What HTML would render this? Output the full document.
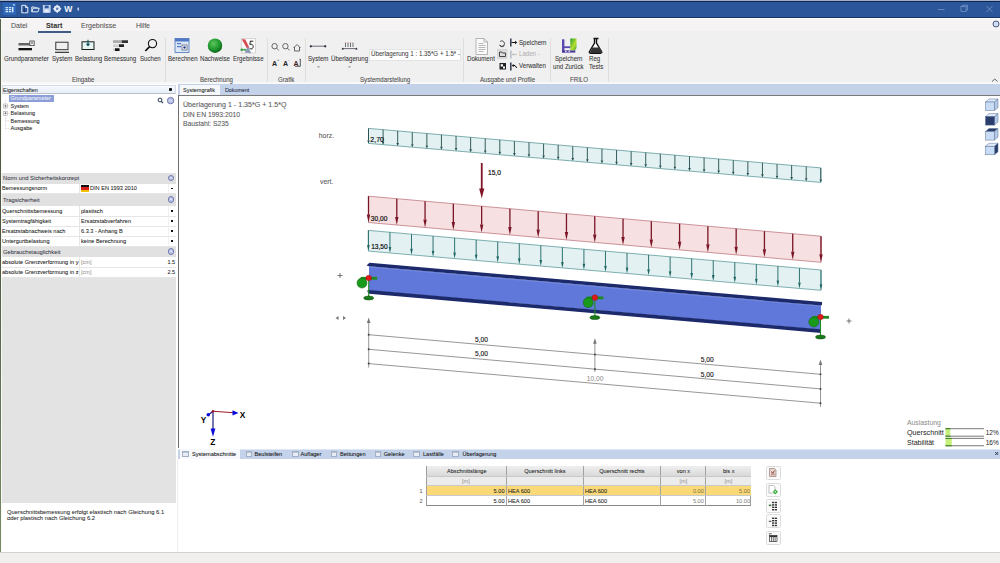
<!DOCTYPE html>
<html><head><meta charset="utf-8">
<style>
*{margin:0;padding:0;box-sizing:border-box}
html,body{width:1000px;height:563px;overflow:hidden;background:#f0f0f0;font-family:"Liberation Sans",sans-serif;color:#222}
.a{position:absolute;white-space:nowrap}
.t{position:absolute;white-space:nowrap;line-height:10px;height:10px;-webkit-text-stroke-width:0.06px}
.m{font-size:7px;color:#505050}
.rl{font-size:6.5px;color:#333;transform:scaleX(0.94);transform-origin:0 50%}
.gl{font-size:6.5px;color:#4a4a4a;transform:scaleX(0.94);transform-origin:0 50%}
.pg{font-size:5.7px;color:#333}
.sep{position:absolute;width:1px;background:#dedede}
svg{position:absolute;left:0;top:0}
</style></head><body>

<div class="a" style="left:0;top:0;width:1000px;height:18px;background:#2b579a"></div>
<div class="a" style="left:0;top:0;width:1000px;height:1px;background:#9fb0c9"></div>
<div class="a" style="left:0;top:1px;width:1000px;height:1px;background:#102550"></div>
<div class="a" style="left:0;top:17px;width:1000px;height:1px;background:#163366"></div>
<div class="a" style="left:0;top:18px;width:1000px;height:1px;background:#ffffff"></div>
<div class="a" style="left:3px;top:3px;width:13px;height:12px;background:#2d66b5"></div>
<svg width="1000" height="20" viewBox="0 0 1000 20">
<g fill="#cfe3ff">
<rect x="5.5" y="7" width="2.5" height="1.3"/><rect x="5.5" y="9" width="2.5" height="1.3"/><rect x="5.5" y="11" width="2.5" height="1.3"/>
<rect x="8.8" y="7" width="2.5" height="1.3"/><rect x="8.8" y="9" width="2.5" height="1.3"/><rect x="8.8" y="11" width="2.5" height="1.3"/>
<rect x="12" y="7" width="1.5" height="5.3"/><circle cx="14" cy="4.8" r="0.9"/>
</g>
<g fill="none" stroke="#e4ecf8" stroke-width="1">
<path d="M21.8 5.3h3.8l2.2 2.2v5.3h-6z"/><path d="M25.6 5.3v2.2h2.2"/>
<path d="M31.8 7v4.8h6.2l1.2-3.6h-6l-1.4 3.6"/><path d="M31.8 7h2.4l0.8 0.8h2.2v0.4"/>
</g>
<path d="M24.3 8.5v3.8" stroke="#1a2f66" stroke-width="1.1"/>
<rect x="43.2" y="5.3" width="7" height="7.2" fill="#b4c8ec" stroke="#e4ecf8" stroke-width="0.6"/><rect x="44.8" y="5.6" width="3.8" height="2.6" fill="#2f5aa0"/><rect x="44.6" y="9.6" width="4.2" height="2.6" fill="#e8eef8"/>
<circle cx="57.2" cy="8.8" r="3.3" fill="#e4ecf8"/><circle cx="57.2" cy="8.8" r="1.3" fill="#5a7ab8"/>
<g fill="#e4ecf8"><rect x="56.5" y="4.8" width="1.4" height="1.4"/><rect x="56.5" y="11.4" width="1.4" height="1.4"/><rect x="53.2" y="8.1" width="1.4" height="1.4"/><rect x="59.8" y="8.1" width="1.4" height="1.4"/></g>
<text x="64.3" y="12.4" font-family="Liberation Sans" font-weight="bold" font-size="8.6" fill="#f3f6fb">W</text>
<rect x="77.5" y="7.6" width="1.5" height="2.8" rx="0.5" fill="#c9d5ea"/>
<g stroke="#7f9bcb" stroke-width="0.7" fill="none">
<path d="M938 9.5h6.5"/>
<rect x="961" y="6.5" width="5" height="5"/><path d="M962.5 6.5v-1.3h5v5h-1.4"/>
<path d="M986.5 6l6 6M992.5 6l-6 6"/>
</g>
</svg>
<div class="a" style="left:0;top:19px;width:1000px;height:12px;background:#f6f3f5"></div>
<div class="t m" style="left:11px;top:20.60px;">Datei</div>
<div class="t m" style="left:46px;top:20.60px;font-weight:bold;color:#333;font-size:7.2px">Start</div>
<div class="t m" style="left:81px;top:20.60px;">Ergebnisse</div>
<div class="t m" style="left:136px;top:20.60px;">Hilfe</div>
<div class="a" style="left:0;top:31px;width:1000px;height:51px;background:#f0f0f0"></div>
<div class="a" style="left:0;top:82px;width:1000px;height:2px;background:#f8f8f8"></div>
<div class="t rl" style="left:4px;top:54.10px;">Grundparameter</div>
<div class="t rl" style="left:52px;top:54.10px;">System</div>
<div class="t rl" style="left:75px;top:54.10px;">Belastung</div>
<div class="t rl" style="left:104px;top:54.10px;">Bemessung</div>
<div class="t rl" style="left:140px;top:54.10px;">Suchen</div>
<div class="t rl" style="left:167.7px;top:54.10px;">Berechnen</div>
<div class="t rl" style="left:200px;top:54.10px;">Nachweise</div>
<div class="t rl" style="left:232.8px;top:54.10px;">Ergebnisse</div>
<div class="t gl" style="left:72px;top:74.50px;">Eingabe</div>
<div class="t gl" style="left:200px;top:74.50px;">Berechnung</div>
<div class="t gl" style="left:278px;top:74.50px;">Grafik</div>
<div class="t gl" style="left:359.5px;top:74.50px;">Systemdarstellung</div>
<div class="t gl" style="left:480px;top:74.50px;">Ausgabe und Profile</div>
<div class="t gl" style="left:570px;top:74.50px;">FRILO</div>
<div class="sep" style="left:165px;top:38px;height:44px"></div>
<div class="sep" style="left:267px;top:38px;height:44px"></div>
<div class="sep" style="left:304.5px;top:38px;height:44px"></div>
<div class="sep" style="left:463px;top:38px;height:44px"></div>
<div class="sep" style="left:549.5px;top:38px;height:44px"></div>
<div class="sep" style="left:607.5px;top:38px;height:44px"></div>
<div class="t rl" style="left:308px;top:54.20px;">System</div>
<div class="t rl" style="left:331px;top:54.20px;">Überlagerung</div>
<div class="t rl" style="left:467px;top:54.20px;">Dokument</div>
<div class="t rl" style="left:519px;top:37.60px;">Speichern</div>
<div class="t rl" style="left:519px;top:49.00px;color:#b0b0b0">Laden -</div>
<div class="t rl" style="left:519px;top:61.00px;">Verwalten</div>
<div class="t rl" style="left:555px;top:54.00px;">Speichern</div>
<div class="t rl" style="left:553px;top:61.50px;">und Zurück</div>
<div class="t rl" style="left:589px;top:54.00px;">Reg</div>
<div class="t rl" style="left:588.5px;top:61.50px;">Tests</div>
<div class="a" style="left:369px;top:48.5px;width:92px;height:12px;background:#fff;border:1px solid #e3e3e3"></div>
<div class="t rl" style="left:371px;top:49.30px;font-size:6.6px;color:#444">Überlagerung 1 : 1.35*G + 1.5* -</div>
<svg width="1000" height="90" viewBox="0 0 1000 90">
<!-- Grundparameter -->
<g><rect x="18.5" y="43" width="11.5" height="2.5" fill="#666"/><rect x="18.5" y="48" width="13.5" height="2.3" fill="#111"/>
<rect x="29.8" y="41" width="4.4" height="4.6" fill="#eee" stroke="#444" stroke-width="0.8"/><path d="M31 42.6h2l-1 1.3z" fill="#222"/></g>
<!-- System -->
<g fill="none" stroke="#222" stroke-width="0.9"><rect x="55.8" y="42.2" width="12.2" height="7.5"/><path d="M55 52.3h14" stroke-width="1.1"/></g>
<!-- Belastung -->
<g><rect x="82" y="41.8" width="12" height="7.7" fill="#e6f4f4" stroke="#1a1a1a" stroke-width="1"/><path d="M88 39.8v4.5" stroke="#0b4d5b" stroke-width="1.1"/><path d="M85.8 43.8h4.4l-2.2 2.6z" fill="#0b4d5b"/></g>
<!-- Bemessung -->
<g><rect x="113" y="40.3" width="15" height="2.7" fill="#d0d0d0"/><rect x="121.5" y="40.3" width="6.5" height="2.7" fill="#333"/><rect x="113" y="40.3" width="8.5" height="2.7" fill="#aaa"/>
<rect x="113" y="44.3" width="11" height="2.7" fill="#d0d0d0"/><rect x="119" y="44.3" width="5" height="2.7" fill="#222"/>
<rect x="113" y="48.3" width="6.5" height="2.7" fill="#d0d0d0"/><rect x="115" y="48.3" width="4.5" height="2.7" fill="#111"/></g>
<!-- Suchen -->
<g fill="none" stroke="#111" stroke-width="1.1"><circle cx="152.5" cy="43.6" r="4.1"/><path d="M149.6 46.6l-4.3 4.4" stroke-width="1.7"/></g>
<!-- Berechnen -->
<g><rect x="175" y="38.5" width="14" height="14" fill="#dbe7f7" stroke="#4a73b8" stroke-width="0.8"/><rect x="175" y="38.5" width="14" height="3" fill="#4f79c4"/>
<rect x="177" y="43" width="4" height="1.2" fill="#4f79c4"/><rect x="177" y="46" width="4" height="1.2" fill="#4f79c4"/><rect x="182" y="45" width="5" height="5" fill="#fff" stroke="#335" stroke-width="0.6"/><circle cx="184.5" cy="47.5" r="1.2" fill="#1a3d8a"/></g>
<!-- Nachweise -->
<defs><radialGradient id="gb" cx="0.4" cy="0.35" r="0.7"><stop offset="0" stop-color="#5cc85c"/><stop offset="0.65" stop-color="#1a922a"/><stop offset="1" stop-color="#0b5a16"/></radialGradient></defs>
<circle cx="215" cy="45.7" r="7.2" fill="url(#gb)"/>
<!-- Ergebnisse -->
<g><rect x="241.2" y="38.6" width="14.3" height="14.4" fill="#fbfbfb" stroke="#c8c0c0" stroke-width="0.6"/>
<path d="M241.8 39.2h3.4l4.2 8.5-2 1.5z" fill="#d84a50"/><path d="M244.5 52.6l3.5-6 3.2 6.6z" fill="#8a9ab8"/>
<path d="M250 41.2h3.3M250.3 41.2l-0.4 3.2c1.8-0.6 3.3 0.2 3.3 2.2s-1.8 3-3.6 2" fill="none" stroke="#111" stroke-width="0.9"/>
<circle cx="241.8" cy="49.8" r="1.3" fill="#2a9a3a"/><path d="M242.5 49.8h2.5" stroke="#2a9a3a" stroke-width="1.1"/><path d="M244.6 48.3l1.8 1.5-1.8 1.5z" fill="#2a9a3a"/></g>
<!-- Grafik -->
<g fill="none" stroke="#555" stroke-width="0.9"><circle cx="274.6" cy="46.2" r="2.7"/><path d="M276.6 48.2l2.2 2.2"/><circle cx="285.4" cy="46.2" r="2.7"/><path d="M287.4 48.2l2.2 2.2"/>
<path d="M293.5 48l3.5-3.5 3.5 3.5M294.5 47v4h5v-4"/></g>
<g font-family="Liberation Sans" font-weight="bold" font-size="7" fill="#222"><text x="272" y="65.5">A</text><text x="283" y="65.5">A</text><text x="293.5" y="65.5" fill="#4a1a20">A</text></g>
<g font-family="Liberation Sans" font-size="4" fill="#222"><text x="277" y="61">+</text><text x="288" y="61">-</text></g>
<path d="M295 66.3h5.3v-7.3l-0.8 0.3" fill="none" stroke="#333" stroke-width="0.8"/>
<!-- System icon -->
<g><path d="M310.5 46.2h15" fill="none" stroke="#334" stroke-width="0.7"/><circle cx="310.8" cy="46.3" r="1.1" fill="#223"/><circle cx="325.2" cy="46.3" r="1.1" fill="#223"/></g>
<!-- Uberlagerung icon -->
<g stroke="#334" stroke-width="0.7" fill="none"><path d="M342.5 48.6h14"/><path d="M345.5 42.8v4.2M348 42.8v4.2M350.5 42.8v4.2M353 42.8v4.2"/></g>
<g fill="#223"><path d="M341.5 49.5l1.2-2 1.2 2z"/><path d="M355.3 49.5l1.2-2 1.2 2z"/></g>
<path d="M345 42.6h8.5" stroke="#d07070" stroke-width="0.5" stroke-dasharray="0.8 0.9"/>
<g fill="#555"><rect x="317.5" y="66.5" width="2" height="0.8"/><rect x="348.5" y="66.5" width="2" height="0.8"/></g>
<!-- Dokument -->
<g><path d="M476 38.5h8l3.5 3.5v12.5h-11.5z" fill="#fafafa" stroke="#9a9a9a" stroke-width="0.7"/><path d="M484 38.5v3.5h3.5" fill="none" stroke="#9a9a9a" stroke-width="0.7"/>
<g stroke="#a8a8a8" stroke-width="0.8"><path d="M478.5 43.5h5M478.5 45.5h7M478.5 47.5h7M478.5 49.5h7M478.5 51.5h5"/></g></g>
<!-- small icons -->
<g fill="none" stroke="#333" stroke-width="0.8"><path d="M500 41.5a2.7 2.7 0 1 1 -0.5 3.5"/><path d="M504.5 45.5a2.7 2.7 0 0 1 -4.8 -0.5"/></g>
<rect x="497.5" y="49.5" width="9.5" height="9" fill="#dcdcdc" stroke="#c8c8c8" stroke-width="0.5"/>
<g fill="none" stroke="#222" stroke-width="0.8"><path d="M499.5 52v4.5h6v-3.5h-3l-0.7 -1z"/></g>
<rect x="499.5" y="63" width="6.5" height="6.5" fill="#222"/><rect x="500.7" y="64.2" width="2.3" height="2.3" fill="#fff"/><rect x="503" y="66.5" width="2" height="2" fill="#fff"/>
<g><rect x="510" y="38.5" width="1.6" height="8" fill="#3a4658"/><path d="M511.6 42.5h4" stroke="#111" stroke-width="1"/><path d="M515 40.8l2.2 1.7-2.2 1.7z" fill="#111"/></g>
<g><rect x="510" y="50.5" width="1.6" height="8" fill="#b8bec8"/><path d="M513 54.5h4" stroke="#bbb" stroke-width="0.9"/><path d="M513.5 53l-1.8 1.5 1.8 1.5z" fill="#bbb"/></g>
<g><rect x="510" y="62.5" width="1.6" height="8" fill="#3a4658"/><path d="M512.5 65.5h2.5l1.8 2.5" stroke="#111" stroke-width="1" fill="none"/><circle cx="513.3" cy="65.6" r="1.1" fill="#111"/></g>
<!-- FRILO save -->
<defs><linearGradient id="fg" x1="0" y1="0" x2="1" y2="1"><stop offset="0" stop-color="#1f9a2a"/><stop offset="0.6" stop-color="#b8e030"/><stop offset="1" stop-color="#3aa02a"/></linearGradient></defs>
<g><rect x="562" y="39.3" width="2.4" height="13.2" fill="#5a4ab0"/><rect x="562" y="46.3" width="8.5" height="1.8" fill="#5a4ab0"/><rect x="562" y="50.3" width="13.3" height="2.3" fill="#4a3aa0"/>
<rect x="565" y="50.6" width="1.6" height="1.4" fill="#cfd8f0"/><rect x="568.5" y="50.6" width="1.6" height="1.4" fill="#cfd8f0"/>
<path d="M570.3 38.4h6.2v9.5l-1.4 2.3h-4.8z" fill="url(#fg)"/></g>
<!-- flask -->
<g><path d="M593.5 38.5h5M594.5 38.5v4.5l-5 8.5c-0.6 1 0 1.7 1 1.7h10c1 0 1.6-0.7 1-1.7l-5-8.5v-4.5" fill="#fff" stroke="#111" stroke-width="1.4"/>
<path d="M592.5 47.5h7l3 5.5h-13z" fill="#333"/></g>
<!-- help and collapse -->
<circle cx="996" cy="24" r="3" fill="#cfdcf2" stroke="#3c4a70" stroke-width="0.9"/>
<path d="M992 81.5l2.8-2.5 2.8 2.5" fill="none" stroke="#444" stroke-width="0.8"/>
</svg>
<div class="a" style="left:38px;top:31px;width:33px;height:2px;background:#3f5b86"></div>
<div class="a" style="left:0;top:84px;width:178px;height:468px;background:#fff"></div>
<div class="a" style="left:0;top:19px;width:1px;height:533px;background:linear-gradient(#56604f,#4c5548 40%,#7a8a6a)"></div>
<div class="a" style="left:1px;top:19px;width:1px;height:533px;background:#f7faee;opacity:0.8"></div>
<div class="a" style="left:2px;top:84.5px;width:173.5px;height:9px;background:linear-gradient(#f7f9fd,#e7eef8);border:1px solid #d3dbe6;border-bottom-color:#b9c0c9"></div>
<div class="t pg" style="left:3px;top:84.60px;font-size:5.5px;color:#222">Eigenschaften</div>
<div class="a" style="left:169px;top:87.5px;width:2.5px;height:3px;background:#111;border-radius:1px"></div>
<div class="a" style="left:9px;top:95px;width:44.5px;height:6.6px;background:#8b9ed8"></div>
<div class="t pg" style="left:10.5px;top:93.30px;font-size:5.5px;color:#eef2fb">Grundparameter</div>
<div class="t pg" style="left:10.6px;top:101.00px;font-size:5.5px;color:#222">System</div>
<div class="t pg" style="left:10.6px;top:108.30px;font-size:5.5px;color:#222">Belastung</div>
<div class="t pg" style="left:10.6px;top:115.80px;font-size:5.5px;color:#222">Bemessung</div>
<div class="t pg" style="left:10.6px;top:123.10px;font-size:5.5px;color:#222">Ausgabe</div>
<svg width="180" height="140" viewBox="0 0 180 140">
<g stroke="#aaa" stroke-width="0.5" fill="none" stroke-dasharray="0.7 0.7"><path d="M5.5 100v28.5h4M5.5 120.5h4M7 106h2.5M7 113.3h2.5"/></g>
<g fill="#fff" stroke="#999" stroke-width="0.5"><rect x="3.5" y="104" width="4" height="4"/><rect x="3.5" y="111.3" width="4" height="4"/></g>
<g stroke="#333" stroke-width="0.5"><path d="M4.3 106h2.4M5.5 104.8v2.4M4.3 113.3h2.4M5.5 112.1v2.4"/></g>
<g fill="none" stroke="#2b3a55" stroke-width="1"><circle cx="160" cy="100" r="1.9"/></g><path d="M161.3 101.3l1.8 1.8" stroke="#2b3a55" stroke-width="1.2"/>
<circle cx="170.6" cy="100.6" r="3.2" fill="#b9c1e8" stroke="#7078ac" stroke-width="1"/><path d="M169.3 101.5l1.3-1.6 1.3 1.6" fill="none" stroke="#f4f6ff" stroke-width="0.7"/>
</svg>
<div class="a" style="left:2px;top:172.5px;width:174px;height:105px;background:#fff"></div>
<div class="a" style="left:2px;top:172.5px;width:174px;height:11.0px;background:#e1e1e1"></div>
<div class="t pg" style="left:3px;top:173.00px;font-size:5.8px;color:#3b3b4b">Norm und Sicherheitskonzept</div>
<div class="a" style="left:167.6px;top:174.6px;width:6.8px;height:6.8px;border-radius:50%;background:#b9c1e8;border:1.1px solid #6f78ac"></div>
<svg width="1000" height="563" viewBox="0 0 1000 563"><path d="M169.6 178.9l1.4-1.8 1.4 1.8" fill="none" stroke="#f4f6ff" stroke-width="0.8"/></svg>
<div class="a" style="left:2px;top:193px;width:174px;height:13px;background:#e1e1e1"></div>
<div class="t pg" style="left:3px;top:194.50px;font-size:5.8px;color:#3b3b4b">Tragsicherheit</div>
<div class="a" style="left:167.6px;top:196.1px;width:6.8px;height:6.8px;border-radius:50%;background:#b9c1e8;border:1.1px solid #6f78ac"></div>
<svg width="1000" height="563" viewBox="0 0 1000 563"><path d="M169.6 200.4l1.4-1.8 1.4 1.8" fill="none" stroke="#f4f6ff" stroke-width="0.8"/></svg>
<div class="a" style="left:2px;top:246px;width:174px;height:11px;background:#e1e1e1"></div>
<div class="t pg" style="left:3px;top:246.50px;font-size:5.8px;color:#3b3b4b">Gebrauchstauglichkeit</div>
<div class="a" style="left:167.6px;top:248.1px;width:6.8px;height:6.8px;border-radius:50%;background:#b9c1e8;border:1.1px solid #6f78ac"></div>
<svg width="1000" height="563" viewBox="0 0 1000 563"><path d="M169.6 252.4l1.4-1.8 1.4 1.8" fill="none" stroke="#f4f6ff" stroke-width="0.8"/></svg>
<div class="a" style="left:2px;top:192.5px;width:174px;height:0.7px;background:#e6e6e6"></div>
<div class="t pg" style="left:2px;top:183.25px;font-size:5.6px;color:#222">Bemessungsnorm</div>
<div class="a" style="left:79px;top:183.5px;width:0.7px;height:9.5px;background:#e6e6e6"></div>
<div class="a" style="left:168px;top:183.5px;width:0.7px;height:9.5px;background:#f0f0f0"></div>
<div class="a" style="left:171px;top:187.65px;width:1.6px;height:1.4px;background:#111"></div>
<div class="t pg" style="left:90px;top:183.25px;font-size:5.6px;color:#222">DIN EN 1993 2010</div>
<div class="a" style="left:2px;top:215.5px;width:174px;height:0.7px;background:#e6e6e6"></div>
<div class="t pg" style="left:2px;top:206.00px;font-size:5.6px;color:#222">Querschnittsbemessung</div>
<div class="a" style="left:79px;top:206px;width:0.7px;height:10px;background:#e6e6e6"></div>
<div class="a" style="left:168px;top:206px;width:0.7px;height:10px;background:#f0f0f0"></div>
<div class="a" style="left:171px;top:210.4px;width:1.6px;height:1.4px;background:#111"></div>
<div class="t pg" style="left:81px;top:206.00px;font-size:5.6px;color:#222">plastisch</div>
<div class="a" style="left:2px;top:225.5px;width:174px;height:0.7px;background:#e6e6e6"></div>
<div class="t pg" style="left:2px;top:216.00px;font-size:5.6px;color:#222">Systemtragfähigkeit</div>
<div class="a" style="left:79px;top:216px;width:0.7px;height:10px;background:#e6e6e6"></div>
<div class="a" style="left:168px;top:216px;width:0.7px;height:10px;background:#f0f0f0"></div>
<div class="a" style="left:171px;top:220.4px;width:1.6px;height:1.4px;background:#111"></div>
<div class="t pg" style="left:81px;top:216.00px;font-size:5.6px;color:#222">Ersatzstabverfahren</div>
<div class="a" style="left:2px;top:235.5px;width:174px;height:0.7px;background:#e6e6e6"></div>
<div class="t pg" style="left:2px;top:226.00px;font-size:5.6px;color:#222">Ersatzstabnachweis nach</div>
<div class="a" style="left:79px;top:226px;width:0.7px;height:10px;background:#e6e6e6"></div>
<div class="a" style="left:168px;top:226px;width:0.7px;height:10px;background:#f0f0f0"></div>
<div class="a" style="left:171px;top:230.4px;width:1.6px;height:1.4px;background:#111"></div>
<div class="t pg" style="left:81px;top:226.00px;font-size:5.6px;color:#222">6.3.3 - Anhang B</div>
<div class="a" style="left:2px;top:245.5px;width:174px;height:0.7px;background:#e6e6e6"></div>
<div class="t pg" style="left:2px;top:236.00px;font-size:5.6px;color:#222">Untergurtbelastung</div>
<div class="a" style="left:79px;top:236px;width:0.7px;height:10px;background:#e6e6e6"></div>
<div class="a" style="left:168px;top:236px;width:0.7px;height:10px;background:#f0f0f0"></div>
<div class="a" style="left:171px;top:240.4px;width:1.6px;height:1.4px;background:#111"></div>
<div class="t pg" style="left:81px;top:236.00px;font-size:5.6px;color:#222">keine Berechnung</div>
<div class="a" style="left:2px;top:266.5px;width:174px;height:0.7px;background:#e6e6e6"></div>
<div class="t pg" style="left:2px;top:257.00px;font-size:5.6px;color:#222">absolute Grenzverformung in y</div>
<div class="a" style="left:79px;top:257px;width:0.7px;height:10px;background:#e6e6e6"></div>
<div class="t pg" style="left:81px;top:257.00px;font-size:5.6px;color:#9a9a9a">[cm]</div>
<div class="a" style="left:2px;top:277.0px;width:174px;height:0.7px;background:#e6e6e6"></div>
<div class="t pg" style="left:2px;top:267.25px;font-size:5.6px;color:#222">absolute Grenzverformung in z</div>
<div class="a" style="left:79px;top:267px;width:0.7px;height:10.5px;background:#e6e6e6"></div>
<div class="t pg" style="left:81px;top:267.25px;font-size:5.6px;color:#9a9a9a">[cm]</div>
<div class="t pg" style="left:167.4px;top:257.00px;font-size:5.6px;color:#222">1.5</div>
<div class="t pg" style="left:167.4px;top:267.20px;font-size:5.6px;color:#222">2.5</div>
<div class="a" style="left:81px;top:185px;width:8px;height:6.6px;background:linear-gradient(#111 0 33%,#d62020 33% 66%,#f2c200 66%)"></div>
<div class="a" style="left:2px;top:278px;width:174px;height:225px;background:#e3e3e3"></div>
<div class="t pg" style="left:7px;top:506.60px;font-size:5.85px;color:#2a2a2a">Querschnittsbemessung erfolgt elastisch nach Gleichung 6.1</div>
<div class="t pg" style="left:7px;top:513.40px;font-size:5.85px;color:#2a2a2a">oder plastisch nach Gleichung 6.2</div>
<div class="a" style="left:178px;top:84px;width:822px;height:11px;background:#c3d2e8"></div>
<div class="a" style="left:179.5px;top:85px;width:40px;height:10px;background:#f5f7fb"></div>
<div class="t pg" style="left:183px;top:84.60px;font-size:5.55px;color:#222">Systemgrafik</div>
<div class="t pg" style="left:225px;top:84.60px;font-size:5.35px;color:#1d2a48">Dokument</div>
<div class="a" style="left:178px;top:95px;width:822px;height:353.5px;background:#fff"></div>
<div class="a" style="left:178px;top:95px;width:822px;height:1px;background:#7a7a7a"></div>
<div class="a" style="left:178px;top:95px;width:1px;height:353px;background:#6e6e6e"></div>
<div class="a" style="left:178px;top:448.5px;width:822px;height:10.5px;background:#c4d3e9;border-top:0.6px solid #dde6f3"></div>
<div class="a" style="left:180px;top:449px;width:60px;height:10px;background:#f6f8fc"></div>
<div class="a" style="left:182.2px;top:451px;width:6.7px;height:5.5px;background:linear-gradient(#b9c4d6 0 20%,#e8edf5 20%);border:0.6px solid #a3afc2"></div>
<div class="t pg" style="left:192px;top:449.20px;font-size:5.6px;color:#111">Systemabschnitte</div>
<div class="a" style="left:245.7px;top:451px;width:6.7px;height:5.5px;background:linear-gradient(#b9c4d6 0 20%,#e8edf5 20%);border:0.6px solid #a3afc2"></div>
<div class="t pg" style="left:254.5px;top:449.20px;font-size:5.6px;color:#111">Beulsteifen</div>
<div class="a" style="left:292.2px;top:451px;width:6.7px;height:5.5px;background:linear-gradient(#b9c4d6 0 20%,#e8edf5 20%);border:0.6px solid #a3afc2"></div>
<div class="t pg" style="left:300.5px;top:449.20px;font-size:5.6px;color:#111">Auflager</div>
<div class="a" style="left:330.7px;top:451px;width:6.7px;height:5.5px;background:linear-gradient(#b9c4d6 0 20%,#e8edf5 20%);border:0.6px solid #a3afc2"></div>
<div class="t pg" style="left:340px;top:449.20px;font-size:5.6px;color:#111">Bettungen</div>
<div class="a" style="left:374.7px;top:451px;width:6.7px;height:5.5px;background:linear-gradient(#b9c4d6 0 20%,#e8edf5 20%);border:0.6px solid #a3afc2"></div>
<div class="t pg" style="left:383.75px;top:449.20px;font-size:5.6px;color:#111">Gelenke</div>
<div class="a" style="left:413.45px;top:451px;width:6.7px;height:5.5px;background:linear-gradient(#b9c4d6 0 20%,#e8edf5 20%);border:0.6px solid #a3afc2"></div>
<div class="t pg" style="left:423px;top:449.20px;font-size:5.6px;color:#111">Lastfälle</div>
<div class="a" style="left:452.2px;top:451px;width:6.7px;height:5.5px;background:linear-gradient(#b9c4d6 0 20%,#e8edf5 20%);border:0.6px solid #a3afc2"></div>
<div class="t pg" style="left:462.5px;top:449.20px;font-size:5.6px;color:#111">Überlagerung</div>
<div class="a" style="left:178px;top:459px;width:822px;height:93px;background:#fff"></div>
<svg width="1000" height="563" viewBox="0 0 1000 563"><path d="M995.2 452l3 3M998.2 452l-3 3" stroke="#1a2a50" stroke-width="0.9"/></svg>
<div class="a" style="left:0;top:552px;width:1000px;height:11px;background:#f1efee;border-top:0.8px solid #d2d2d2"></div>
<div class="a" style="left:176.8px;top:459px;width:1px;height:93px;background:#eeeeee"></div>
<div class="a" style="left:426.25px;top:465.75px;width:325.0px;height:39.75px;border:0.8px solid #9c9c9c;border-bottom-color:#8a8a8a;background:#fff"></div>
<div class="a" style="left:426.75px;top:466.25px;width:79.0px;height:9.7px;background:linear-gradient(#efefef,#d9d9d9)"></div>
<div class="a" style="left:426.75px;top:476.75px;width:79.0px;height:8.5px;background:#ececec"></div>
<div class="a" style="left:506.75px;top:466.25px;width:76.0px;height:9.7px;background:linear-gradient(#efefef,#d9d9d9)"></div>
<div class="a" style="left:506.75px;top:476.75px;width:76.0px;height:8.5px;background:#ececec"></div>
<div class="a" style="left:583.75px;top:466.25px;width:76.25px;height:9.7px;background:linear-gradient(#efefef,#d9d9d9)"></div>
<div class="a" style="left:583.75px;top:476.75px;width:76.25px;height:8.5px;background:#ececec"></div>
<div class="a" style="left:661.0px;top:466.25px;width:44.25px;height:9.7px;background:linear-gradient(#efefef,#d9d9d9)"></div>
<div class="a" style="left:661.0px;top:476.75px;width:44.25px;height:8.5px;background:#ececec"></div>
<div class="a" style="left:706.25px;top:466.25px;width:44.5px;height:9.7px;background:linear-gradient(#efefef,#d9d9d9)"></div>
<div class="a" style="left:706.25px;top:476.75px;width:44.5px;height:8.5px;background:#ececec"></div>
<div class="a" style="left:426.75px;top:485.75px;width:324.0px;height:9.75px;background:#fcd977"></div>
<div class="a" style="left:505.85px;top:465.75px;width:0.9px;height:39.75px;background:#a3a3a3"></div>
<div class="a" style="left:582.85px;top:465.75px;width:0.9px;height:39.75px;background:#a3a3a3"></div>
<div class="a" style="left:660.1px;top:465.75px;width:0.9px;height:39.75px;background:#a3a3a3"></div>
<div class="a" style="left:705.35px;top:465.75px;width:0.9px;height:39.75px;background:#a3a3a3"></div>
<div class="a" style="left:426.25px;top:495.2px;width:325.0px;height:0.7px;background:#c9c9c9"></div>
<div class="a" style="left:426.25px;top:485.45px;width:325.0px;height:0.7px;background:#c9c9c9"></div>
<div class="a" style="left:426.25px;top:475.95px;width:325.0px;height:0.6px;background:#c9c9c9"></div>
<div class="t pg" style="left:447px;top:466.25px;font-size:5.6px;color:#222">Abschnittslänge</div>
<div class="t pg" style="left:524.25px;top:466.25px;font-size:5.6px;color:#222">Querschnitt links</div>
<div class="t pg" style="left:599.25px;top:466.25px;font-size:5.6px;color:#222">Querschnitt rechts</div>
<div class="t pg" style="left:676.75px;top:466.25px;font-size:5.6px;color:#222">von x</div>
<div class="t pg" style="left:723px;top:466.25px;font-size:5.6px;color:#222">bis x</div>
<div class="t pg" style="left:462px;top:476.25px;font-size:5.6px;color:#9a9a9a">[m]</div>
<div class="t pg" style="left:679.5px;top:476.25px;font-size:5.6px;color:#9a9a9a">[m]</div>
<div class="t pg" style="left:724.5px;top:476.25px;font-size:5.6px;color:#9a9a9a">[m]</div>
<div class="t pg" style="right:577.5px;top:486.10px;font-size:5.6px;color:#666">1</div>
<div class="t pg" style="right:495.5px;top:486.10px;font-size:5.6px;color:#222">5.00</div>
<div class="t pg" style="left:508px;top:486.10px;font-size:5.6px;color:#222">HEA 600</div>
<div class="t pg" style="left:585px;top:486.10px;font-size:5.6px;color:#222">HEA 600</div>
<div class="t pg" style="right:296.20000000000005px;top:486.10px;font-size:5.6px;color:#8a7a4a">0.00</div>
<div class="t pg" style="right:250px;top:486.10px;font-size:5.6px;color:#8a7a4a">5.00</div>
<div class="t pg" style="right:577.5px;top:495.60px;font-size:5.6px;color:#666">2</div>
<div class="t pg" style="right:495.5px;top:495.60px;font-size:5.6px;color:#222">5.00</div>
<div class="t pg" style="left:508px;top:495.60px;font-size:5.6px;color:#222">HEA 600</div>
<div class="t pg" style="left:585px;top:495.60px;font-size:5.6px;color:#222">HEA 600</div>
<div class="t pg" style="right:296.20000000000005px;top:495.60px;font-size:5.6px;color:#8a8a8a">5.00</div>
<div class="t pg" style="right:250px;top:495.60px;font-size:5.6px;color:#8a8a8a">10.00</div>
<div class="a" style="left:765.5px;top:465.5px;width:15px;height:14px;background:#fafafa;border:0.8px solid #dcdcdc;border-radius:1.5px"></div>
<div class="a" style="left:765.5px;top:482.5px;width:15px;height:14px;background:#fafafa;border:0.8px solid #dcdcdc;border-radius:1.5px"></div>
<div class="a" style="left:765.5px;top:498.5px;width:15px;height:14px;background:#fafafa;border:0.8px solid #dcdcdc;border-radius:1.5px"></div>
<div class="a" style="left:765.5px;top:514.25px;width:15px;height:14px;background:#fafafa;border:0.8px solid #dcdcdc;border-radius:1.5px"></div>
<div class="a" style="left:765.5px;top:531px;width:15px;height:14px;background:#fafafa;border:0.8px solid #dcdcdc;border-radius:1.5px"></div>
<svg width="1000" height="563" viewBox="0 0 1000 563">
<g><path d="M769.5 468.5h5l1.5 1.5v6.5h-6.5z" fill="#e8d8d0" stroke="#8a6a60" stroke-width="0.6"/><path d="M771 471.5l3.5 3M774.5 470.5l-3 4.5" stroke="#7a3a3a" stroke-width="0.9"/><rect x="771" y="473" width="3.5" height="2.5" fill="#c8a098" opacity="0.8"/></g>
<g><path d="M769 485.5h4.5l1.5 1.5v6h-6z" fill="#fff" stroke="#999" stroke-width="0.6"/><path d="M775.3 489.2l2.6 2.6-2.6 2.6-2.6-2.6z" fill="#3ab03a"/><circle cx="775.3" cy="491.8" r="0.7" fill="#fff"/></g>
<g fill="#333"><rect x="772" y="501.8" width="2.2" height="1.4"/><rect x="774.8" y="501.8" width="2.2" height="1.4"/><rect x="772" y="504.2" width="2.2" height="1.4"/><rect x="774.8" y="504.2" width="2.2" height="1.4"/><rect x="772" y="506.6" width="2.2" height="1.4"/><rect x="774.8" y="506.6" width="2.2" height="1.4"/><rect x="772" y="509" width="2.2" height="1.4"/><rect x="774.8" y="509" width="2.2" height="1.4"/></g>
<path d="M768.8 505.3h2.6" stroke="#222" stroke-width="0.9"/><path d="M770 504.2v2.2" stroke="#2a9a2a" stroke-width="0.8"/>
<g fill="#333"><rect x="772" y="517.6" width="2.2" height="1.4"/><rect x="774.8" y="517.6" width="2.2" height="1.4"/><rect x="772" y="520" width="2.2" height="1.4"/><rect x="774.8" y="520" width="2.2" height="1.4"/><rect x="772" y="522.4" width="2.2" height="1.4"/><rect x="774.8" y="522.4" width="2.2" height="1.4"/><rect x="772" y="524.8" width="2.2" height="1.4"/><rect x="774.8" y="524.8" width="2.2" height="1.4"/></g>
<path d="M768.8 521.3h2.6" stroke="#222" stroke-width="0.9"/>
<g><rect x="769.5" y="535.5" width="7.5" height="6" fill="#fff" stroke="#333" stroke-width="0.7"/><rect x="769.5" y="535.5" width="7.5" height="1.6" fill="#333"/><path d="M771.5 537v4.5M773.3 537v4.5M775.1 537v4.5" stroke="#333" stroke-width="0.7"/><path d="M768.8 533.8h3" stroke="#333" stroke-width="0.8"/></g>
</svg>
<svg width="1000" height="563" viewBox="0 0 1000 563" font-family="Liberation Sans">
<g fill="#5a5a5a" font-size="7.1" stroke="#5a5a5a" stroke-width="0.08">
<text x="183" y="106.6">Überlagerung 1 - 1.35*G + 1.5*Q</text>
<text x="183" y="116.8" font-size="6.8">DIN EN 1993:2010</text>
<text x="183" y="126.4" font-size="6.75">Baustahl: S235</text>
<text x="318.75" y="137.6" font-size="6.9">horz.</text>
<text x="320" y="183.8" font-size="6.9">vert.</text>
</g>
<path d="M368.5 128.4L820.8 167.9L820.8 182.4L368.5 143.4Z" fill="#e3f1f2" stroke="#5f9a9a" stroke-width="0.8"/>
<path d="M368.50 128.40V140.40" stroke="#234c4c" stroke-width="0.9"/>
<path d="M367.20 140.40L369.80 140.40L368.50 143.40Z" fill="#234c4c"/>
<path d="M383.09 129.67V141.66" stroke="#234c4c" stroke-width="0.9"/>
<path d="M381.79 141.66L384.39 141.66L383.09 144.66Z" fill="#234c4c"/>
<path d="M397.68 130.95V142.92" stroke="#234c4c" stroke-width="0.9"/>
<path d="M396.38 142.92L398.98 142.92L397.68 145.92Z" fill="#234c4c"/>
<path d="M412.27 132.22V144.17" stroke="#234c4c" stroke-width="0.9"/>
<path d="M410.97 144.17L413.57 144.17L412.27 147.17Z" fill="#234c4c"/>
<path d="M426.86 133.50V145.43" stroke="#234c4c" stroke-width="0.9"/>
<path d="M425.56 145.43L428.16 145.43L426.86 148.43Z" fill="#234c4c"/>
<path d="M441.45 134.77V146.69" stroke="#234c4c" stroke-width="0.9"/>
<path d="M440.15 146.69L442.75 146.69L441.45 149.69Z" fill="#234c4c"/>
<path d="M456.04 136.05V147.95" stroke="#234c4c" stroke-width="0.9"/>
<path d="M454.74 147.95L457.34 147.95L456.04 150.95Z" fill="#234c4c"/>
<path d="M470.63 137.32V149.21" stroke="#234c4c" stroke-width="0.9"/>
<path d="M469.33 149.21L471.93 149.21L470.63 152.21Z" fill="#234c4c"/>
<path d="M485.22 138.59V150.46" stroke="#234c4c" stroke-width="0.9"/>
<path d="M483.92 150.46L486.52 150.46L485.22 153.46Z" fill="#234c4c"/>
<path d="M499.81 139.87V151.72" stroke="#234c4c" stroke-width="0.9"/>
<path d="M498.51 151.72L501.11 151.72L499.81 154.72Z" fill="#234c4c"/>
<path d="M514.40 141.14V152.98" stroke="#234c4c" stroke-width="0.9"/>
<path d="M513.10 152.98L515.70 152.98L514.40 155.98Z" fill="#234c4c"/>
<path d="M528.99 142.42V154.24" stroke="#234c4c" stroke-width="0.9"/>
<path d="M527.69 154.24L530.29 154.24L528.99 157.24Z" fill="#234c4c"/>
<path d="M543.58 143.69V155.50" stroke="#234c4c" stroke-width="0.9"/>
<path d="M542.28 155.50L544.88 155.50L543.58 158.50Z" fill="#234c4c"/>
<path d="M558.17 144.96V156.75" stroke="#234c4c" stroke-width="0.9"/>
<path d="M556.87 156.75L559.47 156.75L558.17 159.75Z" fill="#234c4c"/>
<path d="M572.76 146.24V158.01" stroke="#234c4c" stroke-width="0.9"/>
<path d="M571.46 158.01L574.06 158.01L572.76 161.01Z" fill="#234c4c"/>
<path d="M587.35 147.51V159.27" stroke="#234c4c" stroke-width="0.9"/>
<path d="M586.05 159.27L588.65 159.27L587.35 162.27Z" fill="#234c4c"/>
<path d="M601.95 148.79V160.53" stroke="#234c4c" stroke-width="0.9"/>
<path d="M600.65 160.53L603.25 160.53L601.95 163.53Z" fill="#234c4c"/>
<path d="M616.54 150.06V161.79" stroke="#234c4c" stroke-width="0.9"/>
<path d="M615.24 161.79L617.84 161.79L616.54 164.79Z" fill="#234c4c"/>
<path d="M631.13 151.34V163.05" stroke="#234c4c" stroke-width="0.9"/>
<path d="M629.83 163.05L632.43 163.05L631.13 166.05Z" fill="#234c4c"/>
<path d="M645.72 152.61V164.30" stroke="#234c4c" stroke-width="0.9"/>
<path d="M644.42 164.30L647.02 164.30L645.72 167.30Z" fill="#234c4c"/>
<path d="M660.31 153.88V165.56" stroke="#234c4c" stroke-width="0.9"/>
<path d="M659.01 165.56L661.61 165.56L660.31 168.56Z" fill="#234c4c"/>
<path d="M674.90 155.16V166.82" stroke="#234c4c" stroke-width="0.9"/>
<path d="M673.60 166.82L676.20 166.82L674.90 169.82Z" fill="#234c4c"/>
<path d="M689.49 156.43V168.08" stroke="#234c4c" stroke-width="0.9"/>
<path d="M688.19 168.08L690.79 168.08L689.49 171.08Z" fill="#234c4c"/>
<path d="M704.08 157.71V169.34" stroke="#234c4c" stroke-width="0.9"/>
<path d="M702.78 169.34L705.38 169.34L704.08 172.34Z" fill="#234c4c"/>
<path d="M718.67 158.98V170.59" stroke="#234c4c" stroke-width="0.9"/>
<path d="M717.37 170.59L719.97 170.59L718.67 173.59Z" fill="#234c4c"/>
<path d="M733.26 160.25V171.85" stroke="#234c4c" stroke-width="0.9"/>
<path d="M731.96 171.85L734.56 171.85L733.26 174.85Z" fill="#234c4c"/>
<path d="M747.85 161.53V173.11" stroke="#234c4c" stroke-width="0.9"/>
<path d="M746.55 173.11L749.15 173.11L747.85 176.11Z" fill="#234c4c"/>
<path d="M762.44 162.80V174.37" stroke="#234c4c" stroke-width="0.9"/>
<path d="M761.14 174.37L763.74 174.37L762.44 177.37Z" fill="#234c4c"/>
<path d="M777.03 164.08V175.63" stroke="#234c4c" stroke-width="0.9"/>
<path d="M775.73 175.63L778.33 175.63L777.03 178.63Z" fill="#234c4c"/>
<path d="M791.62 165.35V176.88" stroke="#234c4c" stroke-width="0.9"/>
<path d="M790.32 176.88L792.92 176.88L791.62 179.88Z" fill="#234c4c"/>
<path d="M806.21 166.63V178.14" stroke="#234c4c" stroke-width="0.9"/>
<path d="M804.91 178.14L807.51 178.14L806.21 181.14Z" fill="#234c4c"/>
<path d="M820.80 167.90V179.40" stroke="#234c4c" stroke-width="0.9"/>
<path d="M819.50 179.40L822.10 179.40L820.80 182.40Z" fill="#234c4c"/>
<path d="M368.5 196.2L821 236.2L821 262.3L368.5 222.5Z" fill="#f7e0e1" stroke="#b86a72" stroke-width="0.7"/>
<path d="M368.50 196.20V214.50" stroke="#7a1526" stroke-width="1.3"/>
<path d="M366.80 214.50L370.20 214.50L368.50 222.50Z" fill="#7a1526"/>
<path d="M396.78 198.70V216.99" stroke="#7a1526" stroke-width="1.3"/>
<path d="M395.08 216.99L398.48 216.99L396.78 224.99Z" fill="#7a1526"/>
<path d="M425.06 201.20V219.47" stroke="#7a1526" stroke-width="1.3"/>
<path d="M423.36 219.47L426.76 219.47L425.06 227.47Z" fill="#7a1526"/>
<path d="M453.34 203.70V221.96" stroke="#7a1526" stroke-width="1.3"/>
<path d="M451.64 221.96L455.04 221.96L453.34 229.96Z" fill="#7a1526"/>
<path d="M481.62 206.20V224.45" stroke="#7a1526" stroke-width="1.3"/>
<path d="M479.93 224.45L483.32 224.45L481.62 232.45Z" fill="#7a1526"/>
<path d="M509.91 208.70V226.94" stroke="#7a1526" stroke-width="1.3"/>
<path d="M508.21 226.94L511.61 226.94L509.91 234.94Z" fill="#7a1526"/>
<path d="M538.19 211.20V229.42" stroke="#7a1526" stroke-width="1.3"/>
<path d="M536.49 229.42L539.89 229.42L538.19 237.42Z" fill="#7a1526"/>
<path d="M566.47 213.70V231.91" stroke="#7a1526" stroke-width="1.3"/>
<path d="M564.77 231.91L568.17 231.91L566.47 239.91Z" fill="#7a1526"/>
<path d="M594.75 216.20V234.40" stroke="#7a1526" stroke-width="1.3"/>
<path d="M593.05 234.40L596.45 234.40L594.75 242.40Z" fill="#7a1526"/>
<path d="M623.03 218.70V236.89" stroke="#7a1526" stroke-width="1.3"/>
<path d="M621.33 236.89L624.73 236.89L623.03 244.89Z" fill="#7a1526"/>
<path d="M651.31 221.20V239.38" stroke="#7a1526" stroke-width="1.3"/>
<path d="M649.61 239.38L653.01 239.38L651.31 247.38Z" fill="#7a1526"/>
<path d="M679.59 223.70V241.86" stroke="#7a1526" stroke-width="1.3"/>
<path d="M677.89 241.86L681.29 241.86L679.59 249.86Z" fill="#7a1526"/>
<path d="M707.88 226.20V244.35" stroke="#7a1526" stroke-width="1.3"/>
<path d="M706.17 244.35L709.58 244.35L707.88 252.35Z" fill="#7a1526"/>
<path d="M736.16 228.70V246.84" stroke="#7a1526" stroke-width="1.3"/>
<path d="M734.46 246.84L737.86 246.84L736.16 254.84Z" fill="#7a1526"/>
<path d="M764.44 231.20V249.32" stroke="#7a1526" stroke-width="1.3"/>
<path d="M762.74 249.32L766.14 249.32L764.44 257.32Z" fill="#7a1526"/>
<path d="M792.72 233.70V251.81" stroke="#7a1526" stroke-width="1.3"/>
<path d="M791.02 251.81L794.42 251.81L792.72 259.81Z" fill="#7a1526"/>
<path d="M821.00 236.20V254.30" stroke="#7a1526" stroke-width="1.3"/>
<path d="M819.30 254.30L822.70 254.30L821.00 262.30Z" fill="#7a1526"/>
<path d="M368.4 230.4L821 270L821 290.3L368.4 251.1Z" fill="#e3f1f2" stroke="#5f9c9c" stroke-width="0.8"/>
<path d="M368.40 230.40V245.10" stroke="#1b6462" stroke-width="0.9"/>
<path d="M367.10 245.10L369.70 245.10L368.40 251.10Z" fill="#1b6462"/>
<path d="M389.95 232.29V246.97" stroke="#1b6462" stroke-width="0.9"/>
<path d="M388.65 246.97L391.25 246.97L389.95 252.97Z" fill="#1b6462"/>
<path d="M411.50 234.17V248.83" stroke="#1b6462" stroke-width="0.9"/>
<path d="M410.20 248.83L412.80 248.83L411.50 254.83Z" fill="#1b6462"/>
<path d="M433.06 236.06V250.70" stroke="#1b6462" stroke-width="0.9"/>
<path d="M431.76 250.70L434.36 250.70L433.06 256.70Z" fill="#1b6462"/>
<path d="M454.61 237.94V252.57" stroke="#1b6462" stroke-width="0.9"/>
<path d="M453.31 252.57L455.91 252.57L454.61 258.57Z" fill="#1b6462"/>
<path d="M476.16 239.83V254.43" stroke="#1b6462" stroke-width="0.9"/>
<path d="M474.86 254.43L477.46 254.43L476.16 260.43Z" fill="#1b6462"/>
<path d="M497.71 241.71V256.30" stroke="#1b6462" stroke-width="0.9"/>
<path d="M496.41 256.30L499.01 256.30L497.71 262.30Z" fill="#1b6462"/>
<path d="M519.27 243.60V258.17" stroke="#1b6462" stroke-width="0.9"/>
<path d="M517.97 258.17L520.57 258.17L519.27 264.17Z" fill="#1b6462"/>
<path d="M540.82 245.49V260.03" stroke="#1b6462" stroke-width="0.9"/>
<path d="M539.52 260.03L542.12 260.03L540.82 266.03Z" fill="#1b6462"/>
<path d="M562.37 247.37V261.90" stroke="#1b6462" stroke-width="0.9"/>
<path d="M561.07 261.90L563.67 261.90L562.37 267.90Z" fill="#1b6462"/>
<path d="M583.92 249.26V263.77" stroke="#1b6462" stroke-width="0.9"/>
<path d="M582.62 263.77L585.22 263.77L583.92 269.77Z" fill="#1b6462"/>
<path d="M605.48 251.14V265.63" stroke="#1b6462" stroke-width="0.9"/>
<path d="M604.18 265.63L606.78 265.63L605.48 271.63Z" fill="#1b6462"/>
<path d="M627.03 253.03V267.50" stroke="#1b6462" stroke-width="0.9"/>
<path d="M625.73 267.50L628.33 267.50L627.03 273.50Z" fill="#1b6462"/>
<path d="M648.58 254.91V269.37" stroke="#1b6462" stroke-width="0.9"/>
<path d="M647.28 269.37L649.88 269.37L648.58 275.37Z" fill="#1b6462"/>
<path d="M670.13 256.80V271.23" stroke="#1b6462" stroke-width="0.9"/>
<path d="M668.83 271.23L671.43 271.23L670.13 277.23Z" fill="#1b6462"/>
<path d="M691.69 258.69V273.10" stroke="#1b6462" stroke-width="0.9"/>
<path d="M690.39 273.10L692.99 273.10L691.69 279.10Z" fill="#1b6462"/>
<path d="M713.24 260.57V274.97" stroke="#1b6462" stroke-width="0.9"/>
<path d="M711.94 274.97L714.54 274.97L713.24 280.97Z" fill="#1b6462"/>
<path d="M734.79 262.46V276.83" stroke="#1b6462" stroke-width="0.9"/>
<path d="M733.49 276.83L736.09 276.83L734.79 282.83Z" fill="#1b6462"/>
<path d="M756.34 264.34V278.70" stroke="#1b6462" stroke-width="0.9"/>
<path d="M755.04 278.70L757.64 278.70L756.34 284.70Z" fill="#1b6462"/>
<path d="M777.90 266.23V280.57" stroke="#1b6462" stroke-width="0.9"/>
<path d="M776.60 280.57L779.20 280.57L777.90 286.57Z" fill="#1b6462"/>
<path d="M799.45 268.11V282.43" stroke="#1b6462" stroke-width="0.9"/>
<path d="M798.15 282.43L800.75 282.43L799.45 288.43Z" fill="#1b6462"/>
<path d="M821.00 270.00V284.30" stroke="#1b6462" stroke-width="0.9"/>
<path d="M819.70 284.30L822.30 284.30L821.00 290.30Z" fill="#1b6462"/>
<g fill="#000" font-size="6.6" stroke="#000" stroke-width="0.15">
<text x="370.3" y="141.5" font-size="7">2,70</text>
<text x="370.8" y="220.9">30,00</text>
<text x="371.2" y="248.8">13,50</text>
<text x="488" y="174.8">15,0</text>
</g>
<path d="M481.75 163V190" stroke="#801526" stroke-width="1.8"/><path d="M479.2 188.5L484.3 188.5L481.75 198.5Z" fill="#801526"/>
<defs><linearGradient id="web" x1="0" y1="0" x2="0" y2="1"><stop offset="0" stop-color="#6b85e2"/><stop offset="0.25" stop-color="#5f78db"/><stop offset="1" stop-color="#5a72d4"/></linearGradient></defs>
<path d="M369 266.5L821 305.7L821 329.7L369 290.5Z" fill="#5f78da"/>
<path d="M369 266.8L821 306.0" stroke="#7088e0" stroke-width="1.2"/>
<path d="M366.5 265.5L369.5 262.8L822 302.0L822 304.7L821 305.5L369 266.3Z" fill="#1c2a6c"/>
<path d="M367 290.8L369 290.1L821 329.3L821 332.9L369 293.7Z" fill="#1c2a6c"/>
<path d="M368.7 278V297" stroke="#1f8a1f" stroke-width="1.1"/>
<ellipse cx="368.7" cy="298" rx="5" ry="2" fill="#1a7a1a" stroke="#0d4d0d" stroke-width="0.5"/>
<path d="M360.7 278.3H377.2" stroke="#1f8a1f" stroke-width="2.8"/>
<circle cx="362.0" cy="283" r="5" fill="#1a9a1a" stroke="#0d5d0d" stroke-width="0.5"/>
<circle cx="368.7" cy="278" r="2.8" fill="#e01a1a" stroke="#901010" stroke-width="0.4"/>
<path d="M594.9 297.6V316.6" stroke="#1f8a1f" stroke-width="1.1"/>
<ellipse cx="594.9" cy="317.6" rx="5" ry="2" fill="#1a7a1a" stroke="#0d4d0d" stroke-width="0.5"/>
<path d="M586.9 297.90000000000003H603.4" stroke="#1f8a1f" stroke-width="2.8"/>
<circle cx="588.1999999999999" cy="302.6" r="5" fill="#1a9a1a" stroke="#0d5d0d" stroke-width="0.5"/>
<circle cx="594.9" cy="297.6" r="2.8" fill="#e01a1a" stroke="#901010" stroke-width="0.4"/>
<path d="M820.5 317V336" stroke="#1f8a1f" stroke-width="1.1"/>
<ellipse cx="820.5" cy="337" rx="5" ry="2" fill="#1a7a1a" stroke="#0d4d0d" stroke-width="0.5"/>
<path d="M812.5 317.3H829.0" stroke="#1f8a1f" stroke-width="2.8"/>
<circle cx="813.8" cy="322" r="5" fill="#1a9a1a" stroke="#0d5d0d" stroke-width="0.5"/>
<circle cx="820.5" cy="317" r="2.8" fill="#e01a1a" stroke="#901010" stroke-width="0.4"/>
<g stroke="#555" stroke-width="0.8"><path d="M337.5 275.5h5M340 273v5"/><path d="M846.5 321h5M849 318.5v5"/></g>
<g fill="#777"><path d="M335.5 318l3-2v4z"/><path d="M346 318l-3-2v4z"/></g>
<g stroke="#6a6a6a" stroke-width="0.7" fill="none">
<path d="M368.7 334.7L820.5 374.3"/>
<path d="M368.7 349.3L820.5 388.90000000000003"/>
<path d="M368.7 363.6L820.5 403.20000000000005"/>
<path d="M368.7 322V367.5"/>
<path d="M594.9 342.5V372"/>
<path d="M820.5 362V407"/>
</g>
<g fill="#444">
<circle cx="368.7" cy="334.70" r="1"/>
<circle cx="368.7" cy="349.30" r="1"/>
<circle cx="368.7" cy="363.60" r="1"/>
<circle cx="594.9" cy="354.53" r="1"/>
<circle cx="594.9" cy="369.13" r="1"/>
<circle cx="820.5" cy="374.30" r="1"/>
<circle cx="820.5" cy="388.90" r="1"/>
<circle cx="820.5" cy="403.20" r="1"/>
</g>
<g fill="#777">
<path d="M366.9 322.9L370.5 322.9L368.7 317.4Z"/>
<path d="M593.1 343.7L596.6999999999999 343.7L594.9 338.2Z"/>
<path d="M818.7 364.9L822.3 364.9L820.5 359.4Z"/>
</g>
<g fill="#111" font-size="6.65" stroke="#111" stroke-width="0.12">
<text x="475" y="342">5,00</text><text x="475" y="356.3">5,00</text>
<text x="700.8" y="361.8">5,00</text><text x="700.8" y="376.6">5,00</text>
</g>
<text x="586.8" y="380.7" font-size="6.65" fill="#888">10,00</text>
<path d="M213 411.3L234 412.8" stroke="#9a1a2a" stroke-width="1.1"/>
<path d="M232.5 410.3L238.5 413.1L232.5 415.6Z" fill="#0a0ad8"/>
<path d="M213 411.3V430" stroke="#1a1a7a" stroke-width="1.2"/>
<path d="M210.6 428.5L215.4 428.5L213 436.8Z" fill="#0a0ad8"/>
<path d="M213 411.3L208.5 414.8" stroke="#1a1a7a" stroke-width="1.1"/><circle cx="208.3" cy="414.8" r="1.8" fill="#0a0ad8"/>
<circle cx="213" cy="411.3" r="1.3" fill="#a01a2a"/>
<g fill="#000" font-size="8.3" font-weight="bold"><text x="239.8" y="418">X</text><text x="210.2" y="444.5">Z</text><text x="200.8" y="422.8">Y</text></g>
<path d="M985.5 102L989.0 99L998.0 99L994.5 102Z" fill="#dfeafa" stroke="#5a6f96" stroke-width="0.5"/>
<path d="M994.5 102L998.0 99L998.0 107.5L994.5 110.5Z" fill="#b5c9e6" stroke="#5a6f96" stroke-width="0.5"/>
<rect x="985.5" y="102" width="9" height="8.5" fill="#c8dcf5" stroke="#5a6f96" stroke-width="0.5"/>
<path d="M985.5 116.6L989.0 113.6L998.0 113.6L994.5 116.6Z" fill="#dfeafa" stroke="#5a6f96" stroke-width="0.5"/>
<path d="M994.5 116.6L998.0 113.6L998.0 122.1L994.5 125.1Z" fill="#b5c9e6" stroke="#5a6f96" stroke-width="0.5"/>
<rect x="985.5" y="116.6" width="9" height="8.5" fill="#2a3e6e" stroke="#5a6f96" stroke-width="0.5"/>
<path d="M985.5 131.6L989.0 128.6L998.0 128.6L994.5 131.6Z" fill="#2a3e6e" stroke="#5a6f96" stroke-width="0.5"/>
<path d="M994.5 131.6L998.0 128.6L998.0 137.1L994.5 140.1Z" fill="#b5c9e6" stroke="#5a6f96" stroke-width="0.5"/>
<rect x="985.5" y="131.6" width="9" height="8.5" fill="#c8dcf5" stroke="#5a6f96" stroke-width="0.5"/>
<path d="M985.5 146.3L989.0 143.3L998.0 143.3L994.5 146.3Z" fill="#dfeafa" stroke="#5a6f96" stroke-width="0.5"/>
<path d="M994.5 146.3L998.0 143.3L998.0 151.8L994.5 154.8Z" fill="#2a3e6e" stroke="#5a6f96" stroke-width="0.5"/>
<rect x="985.5" y="146.3" width="9" height="8.5" fill="#c8dcf5" stroke="#5a6f96" stroke-width="0.5"/>
<text x="907" y="425.4" font-size="6.85" fill="#8a8a8a">Auslastung</text>
<text x="907" y="434.9" font-size="7.2" fill="#1a1a1a">Querschnitt</text>
<text x="907" y="444.5" font-size="7.05" fill="#1a1a1a">Stabilität</text>
<text x="985.7" y="434.9" font-size="6.5" fill="#1a1a1a">12%</text>
<text x="985.7" y="444.5" font-size="6.5" fill="#1a1a1a">16%</text>
<rect x="945.5" y="428.7" width="4.7999999999999545" height="7.5" fill="#c5f07a"/>
<path d="M945.5 428.7H984M945.5 436.2H984" stroke="#7a7a7a" stroke-width="1"/>
<path d="M945.5 428.7H950.3M945.5 436.2H950.3" stroke="#3a8a1a" stroke-width="1"/>
<rect x="945.5" y="438.4" width="6.2999999999999545" height="7.350000000000023" fill="#c5f07a"/>
<path d="M945.5 438.4H984M945.5 445.75H984" stroke="#7a7a7a" stroke-width="1"/>
<path d="M945.5 438.4H951.8M945.5 445.75H951.8" stroke="#3a8a1a" stroke-width="1"/>
</svg>
</body></html>
